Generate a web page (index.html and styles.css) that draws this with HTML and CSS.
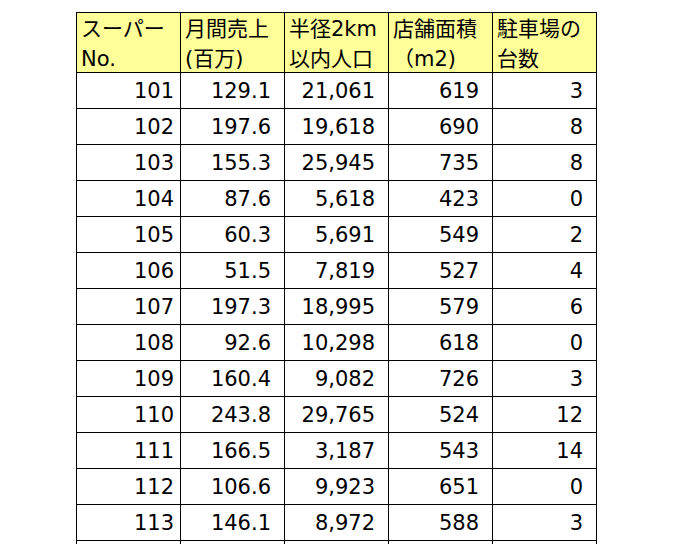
FILE: index.html
```html
<!DOCTYPE html>
<html lang="ja">
<head>
<meta charset="utf-8">
<link rel="stylesheet" href="styles.css">
</head>
<body>
<div class="sheet">
  <div class="cell head">スーパー<br>No.</div>
  <div class="cell head">月間売上<br>(百万)</div>
  <div class="cell head">半径2km<br>以内人口</div>
  <div class="cell head">店舗面積<br>（m2)</div>
  <div class="cell head">駐車場の<br>台数</div>

  <div class="cell num c1">101</div><div class="cell num">129.1</div><div class="cell num">21,061</div><div class="cell num">619</div><div class="cell num">3</div>
  <div class="cell num c1">102</div><div class="cell num">197.6</div><div class="cell num">19,618</div><div class="cell num">690</div><div class="cell num">8</div>
  <div class="cell num c1">103</div><div class="cell num">155.3</div><div class="cell num">25,945</div><div class="cell num">735</div><div class="cell num">8</div>
  <div class="cell num c1">104</div><div class="cell num">87.6</div><div class="cell num">5,618</div><div class="cell num">423</div><div class="cell num">0</div>
  <div class="cell num c1">105</div><div class="cell num">60.3</div><div class="cell num">5,691</div><div class="cell num">549</div><div class="cell num">2</div>
  <div class="cell num c1">106</div><div class="cell num">51.5</div><div class="cell num">7,819</div><div class="cell num">527</div><div class="cell num">4</div>
  <div class="cell num c1">107</div><div class="cell num">197.3</div><div class="cell num">18,995</div><div class="cell num">579</div><div class="cell num">6</div>
  <div class="cell num c1">108</div><div class="cell num">92.6</div><div class="cell num">10,298</div><div class="cell num">618</div><div class="cell num">0</div>
  <div class="cell num c1">109</div><div class="cell num">160.4</div><div class="cell num">9,082</div><div class="cell num">726</div><div class="cell num">3</div>
  <div class="cell num c1">110</div><div class="cell num">243.8</div><div class="cell num">29,765</div><div class="cell num">524</div><div class="cell num">12</div>
  <div class="cell num c1">111</div><div class="cell num">166.5</div><div class="cell num">3,187</div><div class="cell num">543</div><div class="cell num">14</div>
  <div class="cell num c1">112</div><div class="cell num">106.6</div><div class="cell num">9,923</div><div class="cell num">651</div><div class="cell num">0</div>
  <div class="cell num c1">113</div><div class="cell num">146.1</div><div class="cell num">8,972</div><div class="cell num">588</div><div class="cell num">3</div>
  <div class="cell num c1"></div><div class="cell num"></div><div class="cell num"></div><div class="cell num"></div><div class="cell num"></div>
</div>
</body>
</html>
```
FILE: styles.css
```css
html, body {
  margin: 0;
  padding: 0;
  height: 544px;
  overflow: hidden;
  background: #ffffff;
}
.sheet {
  margin: 12px 0 0 76px;
  display: grid;
  grid-template-columns: repeat(5, 104px);
  grid-template-rows: 60px;
  grid-auto-rows: 36px;
  width: 520px;
  border-left: 1px solid #000;
  border-top: 1px solid #000;
  font-family: "DejaVu Sans", "Noto Sans CJK JP", sans-serif;
  font-size: 21px;
  color: #000;
}
.cell {
  box-sizing: border-box;
  border-right: 1px solid #000;
  border-bottom: 1px solid #000;
  white-space: nowrap;
  overflow: visible;
}
.head {
  background: #ffff99;
  line-height: 30px;
  padding: 1px 0 0 4px;
}
.num {
  text-align: right;
  line-height: 33px;
  padding: 2px 13px 0 0;
}
.num.c1 {
  padding-right: 6px;
}
```
